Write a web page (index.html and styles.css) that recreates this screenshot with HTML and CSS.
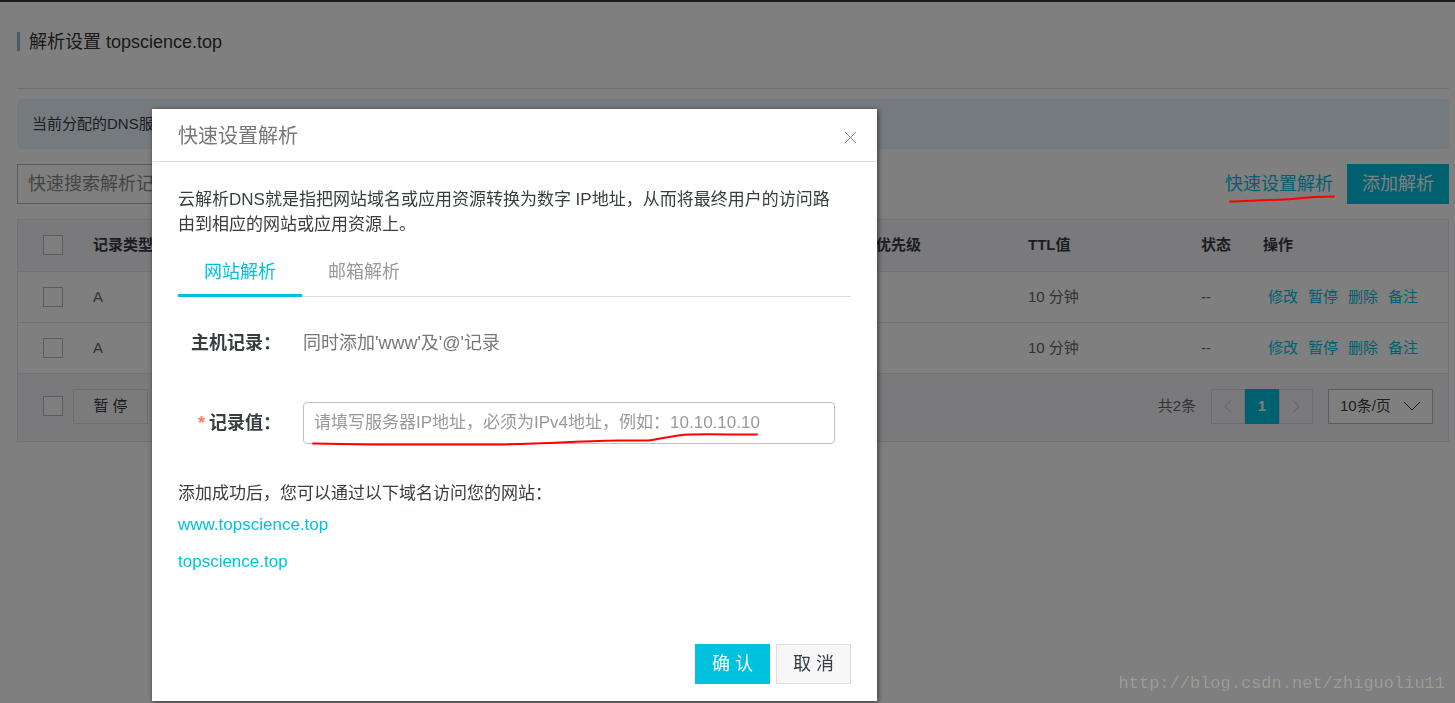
FILE: index.html
```html
<!DOCTYPE html>
<html lang="zh-CN">
<head>
<meta charset="utf-8">
<title>解析设置</title>
<link rel="stylesheet" href="styles.css">
</head>
<body>
<main class="page">
  <header class="page-header">
    <h1 class="page-title">解析设置 topscience.top</h1>
  </header>
  <p class="notice">当前分配的DNS服</p>
  <div class="toolbar">
    <input class="search" type="search" placeholder="快速搜索解析记录" aria-label="快速搜索解析记录">
    <div class="toolbar-actions">
      <a class="link" href="#">快速设置解析</a>
      <button class="btn-add" type="button">添加解析</button>
    </div>
  </div>
  <section class="records">
    <table class="table">
      <colgroup>
        <col class="col-check"><col class="col-type"><col><col class="col-priority"><col class="col-ttl"><col class="col-status"><col class="col-actions">
      </colgroup>
      <thead>
        <tr>
          <th><input class="check" type="checkbox" aria-label="全选"></th>
          <th>记录类型</th><th></th><th>优先级</th><th>TTL值</th><th>状态</th><th>操作</th>
        </tr>
      </thead>
      <tbody>
        <tr>
          <td><input class="check" type="checkbox" aria-label="选择记录"></td>
          <td>A</td><td></td><td></td><td>10 分钟</td><td>--</td>
          <td><div class="row-actions"><a class="link" href="#">修改</a><a class="link" href="#">暂停</a><a class="link" href="#">删除</a><a class="link" href="#">备注</a></div></td>
        </tr>
        <tr>
          <td><input class="check" type="checkbox" aria-label="选择记录"></td>
          <td>A</td><td></td><td></td><td>10 分钟</td><td>--</td>
          <td><div class="row-actions"><a class="link" href="#">修改</a><a class="link" href="#">暂停</a><a class="link" href="#">删除</a><a class="link" href="#">备注</a></div></td>
        </tr>
      </tbody>
    </table>
    <div class="table-footer">
      <input class="check" type="checkbox" aria-label="全选">
      <button class="btn-pause" type="button">暂 停</button>
      <span class="total">共2条</span>
      <nav class="pager" aria-label="分页">
        <button class="pager-item" type="button" aria-label="上一页"><svg width="8" height="13" viewBox="0 0 8 13"><path d="M7 .5 1 6.5l6 6"/></svg></button>
        <button class="pager-item pager-current" type="button">1</button>
        <button class="pager-item" type="button" aria-label="下一页"><svg width="8" height="13" viewBox="0 0 8 13"><path d="m1 .5 6 6-6 6"/></svg></button>
      </nav>
      <div class="page-size">
        <select aria-label="每页条数"><option>10条/页</option></select>
        <svg class="page-size-arrow" width="18" height="10" viewBox="0 0 18 10"><path d="m1 1 8 8 8-8"/></svg>
      </div>
    </div>
  </section>
</main>

<div class="overlay">
  <div class="modal" role="dialog" aria-modal="true" aria-labelledby="dialog-title">
    <header class="modal-header">
      <h2 class="modal-title" id="dialog-title">快速设置解析</h2>
      <button class="modal-close" type="button" aria-label="关闭"><svg width="13" height="13" viewBox="0 0 13 13"><path d="m1 1 11 11M12 1 1 12"/></svg></button>
    </header>
    <form class="modal-body">
      <p class="intro">云解析DNS就是指把网站域名或应用资源转换为数字 IP地址，从而将最终用户的访问路<br>由到相应的网站或应用资源上。</p>
      <div class="tabs" role="tablist">
        <button class="tab tab-active" type="button" role="tab" aria-selected="true">网站解析</button>
        <button class="tab" type="button" role="tab" aria-selected="false">邮箱解析</button>
      </div>
      <div class="field">
        <span class="label">主机记录：</span>
        <span class="value">同时添加'www'及'@'记录</span>
      </div>
      <div class="field">
        <label class="label" for="record"><span class="required">*</span>记录值：</label>
        <input class="text-input" id="record" type="text" placeholder="请填写服务器IP地址，必须为IPv4地址，例如：10.10.10.10">
      </div>
      <p class="result">添加成功后，您可以通过以下域名访问您的网站：</p>
      <ul class="domains">
        <li><a class="link" href="#">www.topscience.top</a></li>
        <li><a class="link" href="#">topscience.top</a></li>
      </ul>
    </form>
    <footer class="modal-footer">
      <button class="btn btn-primary" type="button">确 认</button>
      <button class="btn" type="button">取 消</button>
    </footer>
  </div>
</div>

<svg class="marks" width="1455" height="703" viewBox="0 0 1455 703" aria-hidden="true">
  <path d="M1230 201.500C1246 201.500 1254 200 1270 200S1300 198.500 1314 197L1334 196.500"/>
  <path d="M313 443.500 370 444.500 500 444.500C550 443.500 590 440.500 620 440.500L648 440.500C660 439 675 435 690 434.500S730 434.500 757 434.500"/>
</svg>
<p class="watermark">http://blog.csdn.net/zhiguoliu11</p>
</body>
</html>
```

FILE: styles.css
```css
* {
  box-sizing: border-box;
}

body {
  margin: 0;
  min-height: 100vh;
  overflow: hidden;
  background: #fff;
  border-top: 2px solid #373d41;
  color: #373d41;
  font: 400 15px/24px "Liberation Sans", "Noto Sans CJK SC", sans-serif;
}

h1, h2, p, ul {
  margin: 0;
  padding: 0;
  font-weight: 400;
}

ul {
  list-style: none;
}

button, input, select {
  font: inherit;
  color: inherit;
}

button {
  padding: 0;
  border: 0;
  background: none;
}

svg {
  fill: none;
  stroke: currentColor;
}

.link {
  color: #00c1de;
  text-decoration: none;
}

.page {
  padding: 0 6px 0 17px;
}

.page-header {
  height: 87px;
  padding-top: 30px;
  border-bottom: 1px solid #ddd;
}

.page-title {
  height: 19px;
  padding-left: 9px;
  border-left: 3px solid #88b7e0;
  color: #333;
  font-size: 18px;
  line-height: 20px;
}

.notice {
  margin-top: 10px;
  padding: 13px 15px;
  border-radius: 4px;
  background: #ebf5fd;
}

.toolbar {
  display: flex;
  justify-content: space-between;
  margin: 15px 0;
}

.search {
  width: 300px;
  height: 40px;
  padding: 0 10px;
  border: 1px solid #bbb;
  background: #fff;
  font-size: 18px;
}

.search::placeholder {
  color: #888;
  opacity: 1;
}

.toolbar-actions {
  display: flex;
  align-items: center;
  gap: 14px;
  font-size: 18px;
}

.btn-add {
  height: 40px;
  padding: 0 15px;
  background: #00c1de;
  color: #fff;
}

.records {
  border: 1px solid #e1e6eb;
}

.table {
  width: 100%;
  table-layout: fixed;
  border-collapse: collapse;
}

.col-check { width: 65px; }
.col-type { width: 183px; }
.col-priority { width: 152px; }
.col-ttl { width: 173px; }
.col-status { width: 62px; }
.col-actions { width: 195px; }

.table th, .table td {
  height: 51px;
  padding: 0 0 0 10px;
  border-bottom: 1px solid #e1e6eb;
  text-align: left;
}

.table th {
  background: #f5f5fa;
  font-weight: 700;
}

.table td {
  color: #666;
}

.table th:first-child, .table td:first-child {
  padding-left: 25px;
}

.check {
  display: block;
  appearance: none;
  width: 20px;
  height: 20px;
  margin: 0;
  border: 1px solid #bbb;
  background: #fff;
}

.row-actions {
  display: flex;
  gap: 10px;
  padding-left: 5px;
}

.table-footer {
  display: flex;
  align-items: center;
  padding: 15px 15px 17px 25px;
  background: #f5f5fa;
}

.btn-pause {
  width: 75px;
  height: 35px;
  margin-left: 10px;
  border: 1px solid #ddd;
  background: #f7f7f7;
}

.total {
  margin-left: auto;
  color: #666;
}

.pager {
  display: flex;
  margin: 0 15px;
}

.pager-item {
  display: flex;
  align-items: center;
  justify-content: center;
  width: 34px;
  height: 35px;
  border: 1px solid #ddd;
  color: #bbb;
}

.pager-current {
  border-color: #00c1de;
  background: #00c1de;
  color: #fff;
  font-weight: 700;
}

.page-size {
  position: relative;
}

.page-size select {
  appearance: none;
  width: 105px;
  height: 35px;
  padding: 0 11px;
  border: 1px solid #bbb;
  border-radius: 0;
  background: #fff;
}

.page-size-arrow {
  position: absolute;
  top: 12px;
  right: 12px;
  pointer-events: none;
}

.overlay {
  position: fixed;
  inset: 0;
  padding: 109px 0 0 152px;
  background: rgba(0, 0, 0, .5);
}

.modal {
  width: 725px;
  max-width: 100%;
  border: 1px solid #fff;
  background: #fff;
  box-shadow: 1px 1px 5px rgba(0, 0, 0, .6);
  font-size: 18px;
}

.modal-header {
  display: flex;
  align-items: center;
  justify-content: space-between;
  height: 52px;
  padding: 0 19px 0 25px;
  border-bottom: 1px solid #ddd;
}

.modal-title {
  color: #777;
  font-size: 20px;
}

.modal-close {
  display: flex;
  padding-top: 4px;
  color: #888;
}

.modal-body {
  padding: 25px 25px 0;
}

.intro {
  font-size: 17px;
  line-height: 25px;
}

.tabs {
  display: flex;
  height: 50px;
  margin: 10px 0 25px;
  border-bottom: 1px solid #ddd;
}

.tab {
  margin-bottom: -1px;
  padding: 2px 26px 0;
  border-bottom: 3px solid transparent;
  color: #999;
}

.tab-active {
  border-bottom-color: #00c1de;
  color: #00c1de;
}

.field {
  display: flex;
  align-items: center;
  gap: 22px;
  height: 42px;
  margin-bottom: 38px;
}

.label {
  flex: none;
  width: 103px;
  font-weight: 700;
  text-align: right;
}

.required {
  margin-right: 4px;
  color: #ff7d5c;
}

.value {
  color: #777;
}

.text-input {
  flex: 1;
  margin-right: 16px;
  height: 42px;
  padding: 0 10px;
  border: 1px solid #c0c0c0;
  border-radius: 4px;
  background: #fff;
  font-size: 17px;
}

.text-input::placeholder {
  color: #999;
  opacity: 1;
}

.result {
  font-size: 17px;
}

.domains {
  display: grid;
  gap: 13px;
  margin-top: 7px;
  font-size: 17px;
}

.modal-footer {
  display: flex;
  justify-content: flex-end;
  gap: 6px;
  padding: 70px 25px 16px;
}

.btn {
  width: 75px;
  height: 40px;
  border: 1px solid #ddd;
  background: #f7f7f7;
}

.btn-primary {
  border-color: #00c1de;
  background: #00c1de;
  color: #fff;
}

.marks {
  position: absolute;
  top: 0;
  left: 0;
  pointer-events: none;
  stroke: #f00;
  stroke-width: 2;
  stroke-linecap: round;
}

.watermark {
  position: fixed;
  right: 10px;
  bottom: 7px;
  color: #9c9c94;
  font: 17px/24px "Liberation Mono", monospace;
}
```
